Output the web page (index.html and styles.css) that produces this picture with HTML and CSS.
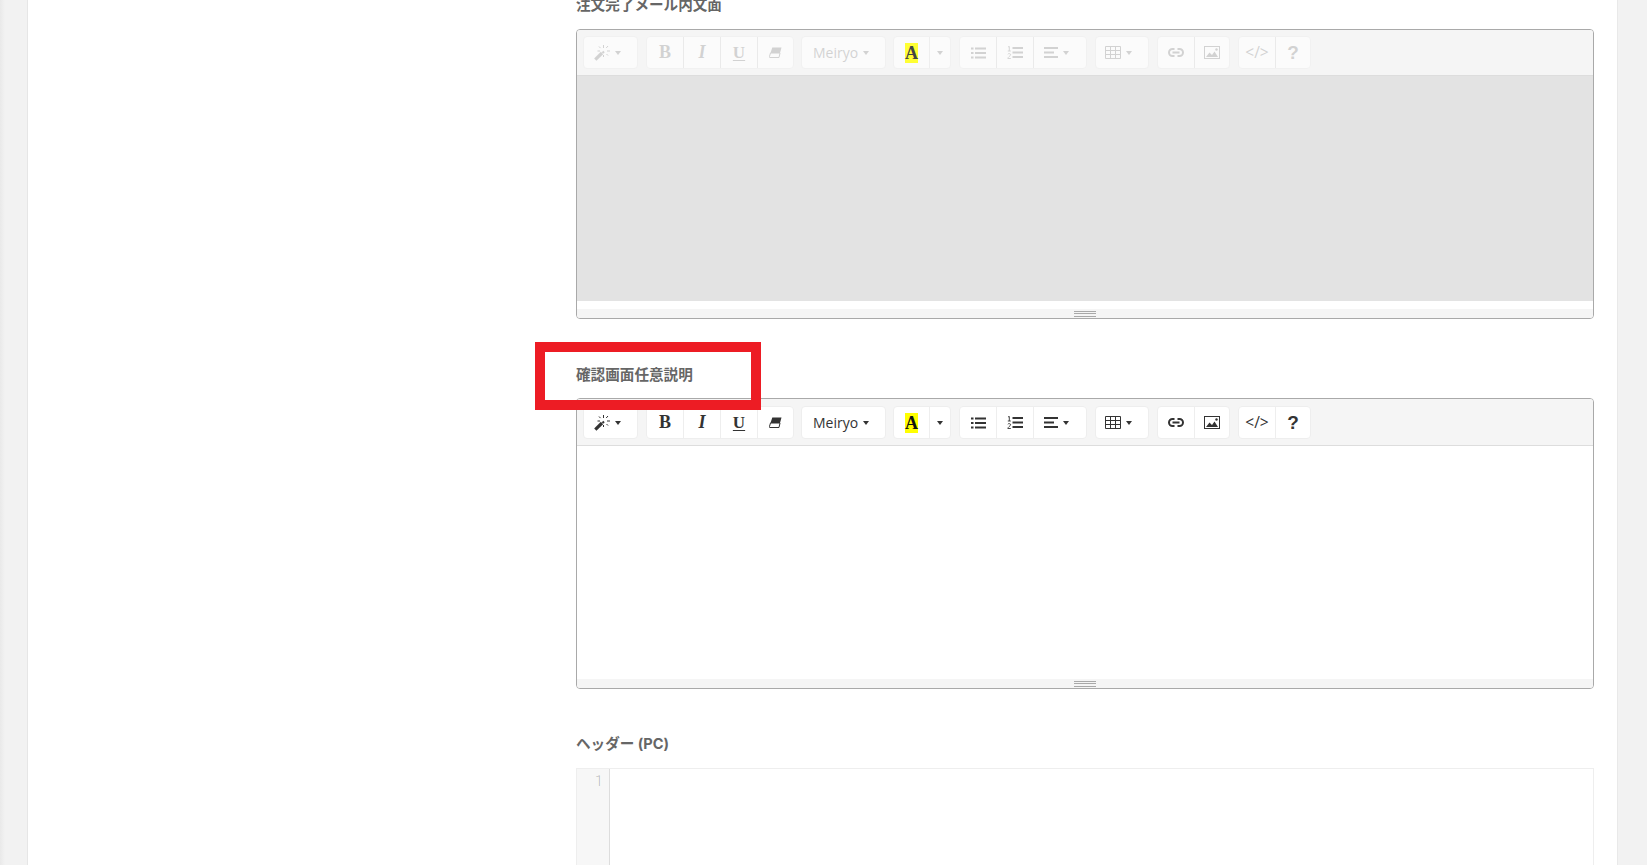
FILE: index.html
```html
<!DOCTYPE html>
<html lang="ja">
<head>
<meta charset="utf-8">
<title>確認画面任意説明</title>
<link rel="stylesheet" href="styles.css">
</head>
<body>
<svg class="defs" width="0" height="0" aria-hidden="true">
  <symbol id="i-magic" viewBox="0 0 16 16">
    <path d="M1.300 14.700 8 8" fill="none" stroke="currentColor" stroke-width="3.200"/>
    <path d="M8.500 8 10 6.500" fill="none" stroke="currentColor" stroke-width="2"/>
    <path d="M9.500 0v3M9.500 10v2M14 1l-1.800 2M5 1.500l1.500 1.600M12.500 9l1.500 1.500M13 6h3M3.500 6h2.500" fill="none" stroke="currentColor" stroke-width="1"/>
  </symbol>
  <symbol id="i-eraser" viewBox="0 0 13 11">
    <path d="M3.300.5H12.500L11 6H1.500z" fill="currentColor"/>
    <path d="M1.500 6H11l-1 4.500H1a.6.6 0 0 1-.6-.8z" fill="#fff" stroke="currentColor" stroke-width="1"/>
  </symbol>
  <symbol id="i-ul" viewBox="0 0 15 12">
    <path d="M4 1.500h11M4 6h11M4 10.500h11M0 1.500h2.500M0 6h2.500M0 10.500h2.500" stroke="currentColor" stroke-width="2" fill="none"/>
  </symbol>
  <symbol id="i-ol" viewBox="0 0 16 13">
    <path d="M5.500 2h10.500M5.500 6.500h10.500M5.500 11h10.500" stroke="currentColor" stroke-width="2" fill="none"/>
    <path d="M1 1 2.300.4V5M.8 5h3M.8 8.300c.4-1 2.900-1 2.800.5 0 1-2.800 2.400-2.800 3.700h3" stroke="currentColor" stroke-width=".9" fill="none"/>
  </symbol>
  <symbol id="i-align" viewBox="0 0 14 11">
    <path d="M0 1h14M0 5.500h10M0 10h14" stroke="currentColor" stroke-width="2" fill="none"/>
  </symbol>
  <symbol id="i-table" viewBox="0 0 16 13">
    <path d="M.5.500h15v12H.5zM.5 4.500h15M.5 8.500h15M5.500.5v12M10.500.5v12" stroke="currentColor" stroke-width="1" fill="none"/>
  </symbol>
  <symbol id="i-link" viewBox="0 0 16 9">
    <path d="M6.500 8H4.500a3.500 3.500 0 0 1 0-7H6.500M9.500 1h2a3.500 3.500 0 0 1 0 7h-2" fill="none" stroke="currentColor" stroke-width="2"/>
    <path d="M4.500 4.500h7" stroke="currentColor" stroke-width="2"/>
  </symbol>
  <symbol id="i-pic" viewBox="0 0 16 13">
    <rect x=".5" y=".5" width="15" height="12" fill="none" stroke="currentColor"/>
    <path d="M2 11l3.500-4.500 2.500 2.500 2.500-3.500 3.500 5.500z" fill="currentColor"/>
    <circle cx="12.500" cy="3.500" r="1.200" fill="currentColor"/>
  </symbol>
</svg>

<div class="page">
  <aside class="side side-left"></aside>
  <main class="card">
    <section class="field field-first">
      <h3 class="label">注文完了メール内文面</h3>
      <div class="editor">
        <div class="toolbar toolbar-off">
          <div class="group g-magic fade"><span class="btn btn-pad"><svg class="ico ico-magic"><use href="#i-magic"/></svg><i class="caret"></i></span></div>
          <div class="group g-style fade">
            <span class="btn btn-sq t-b">B</span><span class="btn btn-sq t-i">I</span><span class="btn btn-sq t-u">U</span><span class="btn btn-sq"><svg class="ico ico-eraser"><use href="#i-eraser"/></svg></span>
          </div>
          <div class="group g-font fade"><span class="btn btn-font">Meiryo<i class="caret"></i></span></div>
          <div class="group g-color"><span class="btn btn-color btn-color-off"><span class="t-a">A</span></span><span class="btn btn-split btn-split-off"><i class="caret"></i></span></div>
          <div class="group g-list fade">
            <span class="btn btn-sq"><svg class="ico ico-ul"><use href="#i-ul"/></svg></span><span class="btn btn-sq"><svg class="ico ico-ol"><use href="#i-ol"/></svg></span><span class="btn btn-pad btn-align"><svg class="ico ico-align"><use href="#i-align"/></svg><i class="caret"></i></span>
          </div>
          <div class="group g-table fade"><span class="btn btn-pad btn-table"><svg class="ico ico-table"><use href="#i-table"/></svg><i class="caret"></i></span></div>
          <div class="group g-pair fade">
            <span class="btn btn-sq"><svg class="ico ico-link"><use href="#i-link"/></svg></span><span class="btn btn-sq"><svg class="ico ico-pic"><use href="#i-pic"/></svg></span>
          </div>
          <div class="group g-pair fade"><span class="btn btn-sq t-code">&lt;/&gt;</span><span class="btn btn-sq t-q">?</span></div>
        </div>
        <div class="area area-off"></div>
        <div class="gap"></div>
        <div class="status"><span class="grip"></span></div>
      </div>
    </section>

    <section class="field">
      <h3 class="label">確認画面任意説明</h3>
      <div class="editor">
        <div class="toolbar">
          <div class="group g-magic"><span class="btn btn-pad"><svg class="ico ico-magic"><use href="#i-magic"/></svg><i class="caret"></i></span></div>
          <div class="group g-style">
            <span class="btn btn-sq t-b">B</span><span class="btn btn-sq t-i">I</span><span class="btn btn-sq t-u">U</span><span class="btn btn-sq"><svg class="ico ico-eraser"><use href="#i-eraser"/></svg></span>
          </div>
          <div class="group g-font"><span class="btn btn-font">Meiryo<i class="caret"></i></span></div>
          <div class="group g-color"><span class="btn btn-color"><span class="t-a">A</span></span><span class="btn btn-split"><i class="caret"></i></span></div>
          <div class="group g-list">
            <span class="btn btn-sq"><svg class="ico ico-ul"><use href="#i-ul"/></svg></span><span class="btn btn-sq"><svg class="ico ico-ol"><use href="#i-ol"/></svg></span><span class="btn btn-pad btn-align"><svg class="ico ico-align"><use href="#i-align"/></svg><i class="caret"></i></span>
          </div>
          <div class="group g-table"><span class="btn btn-pad btn-table"><svg class="ico ico-table"><use href="#i-table"/></svg><i class="caret"></i></span></div>
          <div class="group g-pair">
            <span class="btn btn-sq"><svg class="ico ico-link"><use href="#i-link"/></svg></span><span class="btn btn-sq"><svg class="ico ico-pic"><use href="#i-pic"/></svg></span>
          </div>
          <div class="group g-pair"><span class="btn btn-sq t-code">&lt;/&gt;</span><span class="btn btn-sq t-q">?</span></div>
        </div>
        <div class="area"></div>
        <div class="status"><span class="grip"></span></div>
      </div>
    </section>

    <section class="field">
      <h3 class="label label-latin">ヘッダー (PC)</h3>
      <div class="code">
        <div class="gutter">1</div>
        <div class="code-body"></div>
      </div>
    </section>
  </main>
  <aside class="side side-right"></aside>
</div>
<div class="highlight"></div>
</body>
</html>
```
FILE: styles.css
```css
* { box-sizing: border-box; }
html, body { margin: 0; height: 865px; overflow: hidden; background: #fff; }
body { font-family: "Open Sans", "Noto Sans CJK JP", sans-serif; color: #333; position: relative; }
.defs { position: absolute; }

.page { display: flex; height: 865px; }
.side { background: #f2f2f2; flex: none; }
.side-left { width: 28px; border-right: 1px solid #e6e6e6; background: linear-gradient(90deg, #e9e9e9 0, #f2f2f2 5px); }
.side-right { width: 30px; border-left: 1px solid #e9e9e9; }
.card { flex: 1; padding: 0 23px 0 548px; overflow: hidden; background: #fff; }

.field { margin-top: 44px; }
.field-first { margin-top: -7px; }
.field-first .label { margin-bottom: 14px; }
.label {
  margin: 0 0 13px;
  height: 22px;
  font: 700 14.600px/22px "Noto Sans CJK JP", sans-serif;
  color: #666;
}
.label-latin { font-family: "Inter", "Noto Sans CJK JP", sans-serif; }

.editor { border: 1px solid #a9a9a9; border-radius: 4px; height: 291px; display: flex; flex-direction: column; overflow: hidden; }
.field-first .editor { height: 290px; }

.toolbar { display: flex; gap: 8px; height: 47px; flex: none; padding: 7px 0 0 6px; background: #f5f5f5; border-bottom: 1px solid #ddd; }
.toolbar-off { height: 46px; padding-top: 6px; }
.group { display: flex; height: 33px; flex: none; background: #fff; border: 1px solid #eee; border-radius: 4px; }
.toolbar-off .group { background: #fbfbfb; border-color: #f1f1f1; }
.g-magic { width: 55px; }
.g-style { width: 148px; }
.g-font { width: 85px; margin-left: -1px; }
.g-color { width: 58px; margin-left: -1px; }
.g-list { width: 128px; }
.g-table { width: 54px; }
.g-pair { width: 73px; }
.fade > * { opacity: .2; }

.btn { display: flex; align-items: center; justify-content: center; height: 100%; border-left: 1px solid #eee; color: #333; }
.btn:first-child { border-left: 0; }
.toolbar-off .fade .btn { border-left-color: #aaa; }
.toolbar-off .fade .btn:first-child { border-left: 0; }
.btn-sq { width: 37px; }
.btn-sq:first-child { width: 36px; }
.btn-sq:last-child { width: auto; flex: 1; }
.btn-pad { flex: 1; justify-content: flex-start; gap: 5px; padding-left: 10px; }
.btn-table { padding-left: 9px; }
.btn-font { flex: 1; justify-content: flex-start; gap: 5px; padding-left: 11px; font: 400 14px/1 "Open Sans", sans-serif; }
.btn-color { width: 35px; }
.btn-split { flex: 1; }
.btn-split-off .caret { opacity: .2; }

.caret { display: block; flex: none; width: 0; height: 0; border-style: solid; border-width: 4px 3px 0; border-color: #333 transparent transparent; }
.ico { display: block; flex: none; }
.ico-magic { width: 16px; height: 16px; }
.ico-eraser { width: 13px; height: 11px; }
.ico-ul { width: 15px; height: 12px; }
.ico-ol { width: 16px; height: 13px; }
.ico-align { width: 14px; height: 11px; }
.ico-table { width: 16px; height: 13px; }
.ico-link { width: 16px; height: 9px; }
.ico-pic { width: 16px; height: 13px; }

.t-b, .t-i, .t-u, .t-a { font-family: "Liberation Serif", serif; font-size: 18px; font-weight: 700; }
.t-i { font-style: italic; }
.t-u { text-decoration: underline; text-underline-offset: 2px; font-size: 17px; }
.t-a { display: block; width: 13px; height: 20px; background: #ff0; text-align: center; line-height: 21px; color: #111; }
.btn-color-off .t-a { background: #ffff33; color: #444; }
.t-code { font: 400 15.500px/1 "Open Sans", sans-serif; }
.t-q { font: 700 19px/1 "Liberation Sans", sans-serif; }

.area { flex: 1; background: #fff; }
.area-off { background: #e3e3e3; }
.gap { height: 8px; flex: none; background: #fff; }
.status { height: 9px; flex: none; background: #f5f5f5; display: flex; justify-content: center; padding-top: 2px; }
.grip { display: block; width: 22px; height: 6px; border-top: 1px solid #a9a9a9; border-bottom: 1px solid #a9a9a9; background: linear-gradient(#a9a9a9, #a9a9a9) 0 1px / 100% 1px no-repeat; }

.code { display: flex; height: 240px; border: 1px solid #eee; }
.gutter { width: 33px; flex: none; background: #f7f7f7; border-right: 1px solid #ddd; padding: 2px 6px 0 0; text-align: right; font: 100 15px/20px "Roboto", sans-serif; color: #777; }
.code-body { flex: 1; background: #fff; }

.highlight { position: absolute; left: 535px; top: 342px; width: 226px; height: 68px; border: 10px solid #ed1c24; pointer-events: none; }
```
